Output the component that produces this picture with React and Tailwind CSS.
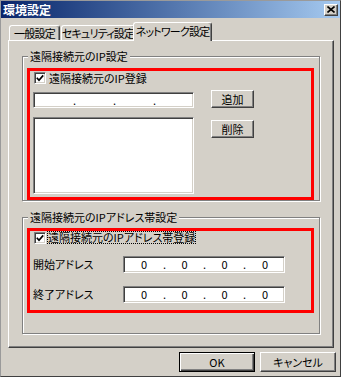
import React from "react";

const sunken =
  "bg-white border border-t-[#808080] border-l-[#808080] border-r-white border-b-white shadow-[inset_1px_1px_0_#404040,inset_-1px_-1px_0_#d4d0c8]";
const raised =
  "flex items-center justify-center bg-[#d4d0c8] border border-t-white border-l-white border-r-[#404040] border-b-[#404040] shadow-[inset_-1px_-1px_0_#808080]";
const groupBox =
  "relative border border-[#808080] shadow-[inset_1px_1px_0_#ffffff,1px_1px_0_#ffffff]";

const CheckBox = () => (
  <div className={`w-[12px] h-[12px] shrink-0 flex items-center justify-center ${sunken}`}>
    <svg width="8" height="8" viewBox="0 0 8 8">
      <polyline points="0.8,3.8 3,6.2 7.2,1.4" fill="none" stroke="#000" strokeWidth="1.7" />
    </svg>
  </div>
);

const IpField = ({ width, height, values }) => {
  const seg = (i, w) => (
    <div className={`${w} flex items-center justify-center`}>{values ? values[i] : ""}</div>
  );
  const dot = <div className="w-[3px] flex items-center justify-center">.</div>;
  return (
    <div className={`${width} ${height} ${sunken} flex pl-[1px] leading-none`}>
      {seg(0, "w-[38px]")}
      {dot}
      {seg(1, "w-[37px]")}
      {dot}
      {seg(2, "w-[37px]")}
      {dot}
      {seg(3, "flex-1")}
    </div>
  );
};

const Tab = ({ label, selected, className }) => (
  <div
    className={`${className} flex items-center justify-center whitespace-nowrap tracking-[-0.8px] rounded-t-[3px] border border-b-0 border-t-white border-l-white border-r-[#404040] shadow-[inset_-1px_0_0_#808080] bg-[#d4d0c8] ${
      selected ? "relative z-10 h-[19px] -mb-[1px] pb-[2px]" : "h-[15px]"
    }`}
  >
    {label}
  </div>
);

export default function App() {
  return (
    <div className="w-[341px] h-[377px] bg-[#d4d0c8] border border-l-[#9a9a9a] border-t-[#9a9a9a] border-r-[#404040] border-b-[#404040] flex flex-col text-[11px] text-black [font-family:'Noto_Sans_CJK_JP',sans-serif] [font-feature-settings:'palt'] leading-none">
      {/* title bar */}
      <div className="h-[17px] shrink-0 flex items-center justify-between bg-linear-to-r from-[#0a246a] to-[#a6caf0] pl-[2px] pr-[2px]">
        <span className="text-white font-bold text-[12px]">環境設定</span>
        <div className={`w-[14px] h-[12px] ${raised}`}>
          <svg width="8" height="7" viewBox="0 0 8 7">
            <path d="M0.5 0.5 L7.5 6.5 M7.5 0.5 L0.5 6.5" stroke="#000" strokeWidth="1.6" />
          </svg>
        </div>
      </div>

      {/* tabs */}
      <div className="mt-[4px] h-[18px] flex items-end pl-[8px]">
        <Tab label="一般設定" className="w-[51px]" />
        <Tab label="セキュリティ設定" className="w-[74px] ml-[1px]" />
        <Tab label="ネットワーク設定" className="w-[79px] -ml-[2px]" selected />
      </div>

      {/* panel */}
      <div className="ml-[7px] w-[326px] h-[308px] shrink-0 flex flex-col border border-t-white border-l-white border-r-[#404040] border-b-[#404040] shadow-[inset_-1px_-1px_0_#808080]">
        {/* group 1 */}
        <div className={`${groupBox} ml-[13px] mt-[15px] w-[298px] h-[145px]`}>
          <span className="absolute -top-[6px] left-[5px] px-[2px] bg-[#d4d0c8]">遠隔接続元のIP設定</span>
          <div className="ml-[4px] mt-[11px] w-[287px] h-[132px] border-[3px] border-[#ff0000] flex flex-col">
            <div className="flex items-center pl-[4px] pt-[1px]">
              <CheckBox />
              <span className="ml-[3px]">遠隔接続元のIP登録</span>
            </div>
            <div className="flex items-start pl-[3px] mt-[6px]">
              <div className="mt-[2px]">
                <IpField width="w-[161px]" height="h-[16px]" />
              </div>
              <div className={`${raised} ml-[17px] w-[43px] h-[18px]`}>追加</div>
            </div>
            <div className="flex items-start pl-[3px] mt-[9px]">
              <div className={`${sunken} w-[161px] h-[77px]`} />
              <div className={`${raised} ml-[17px] mt-[3px] w-[43px] h-[18px]`}>削除</div>
            </div>
          </div>
        </div>

        {/* group 2 */}
        <div className={`${groupBox} ml-[13px] mt-[16px] w-[298px] h-[117px]`}>
          <span className="absolute -top-[6px] left-[5px] px-[2px] bg-[#d4d0c8]">遠隔接続元のIPアドレス帯設定</span>
          <div className="ml-[4px] mt-[10px] w-[287px] h-[85px] border-[3px] border-[#ff0000] flex flex-col">
            <div className="flex items-center pl-[4px] h-[13px]">
              <CheckBox />
              <span className="ml-[1px] px-[1px] h-[13px] flex items-center outline outline-1 outline-dotted outline-black -outline-offset-1">
                遠隔接続元のIPアドレス帯登録
              </span>
            </div>
            <div className="flex items-center pl-[3px] mt-[12px]">
              <span className="w-[90px]">開始アドレス</span>
              <IpField width="w-[162px]" height="h-[17px]" values={["0", "0", "0", "0"]} />
            </div>
            <div className="flex items-center pl-[3px] mt-[13px]">
              <span className="w-[90px]">終了アドレス</span>
              <IpField width="w-[162px]" height="h-[17px]" values={["0", "0", "0", "0"]} />
            </div>
          </div>
        </div>
      </div>

      {/* buttons */}
      <div className="mt-[4px] flex justify-end gap-[5px] pr-[4px]">
        <div className="w-[76px] h-[20px] flex items-center justify-center bg-[#d4d0c8] border border-black shadow-[inset_1px_1px_0_#ffffff,inset_-1px_-1px_0_#404040,inset_-2px_-2px_0_#808080]">
          OK
        </div>
        <div className={`${raised} w-[76px] h-[20px]`}>キャンセル</div>
      </div>
    </div>
  );
}
